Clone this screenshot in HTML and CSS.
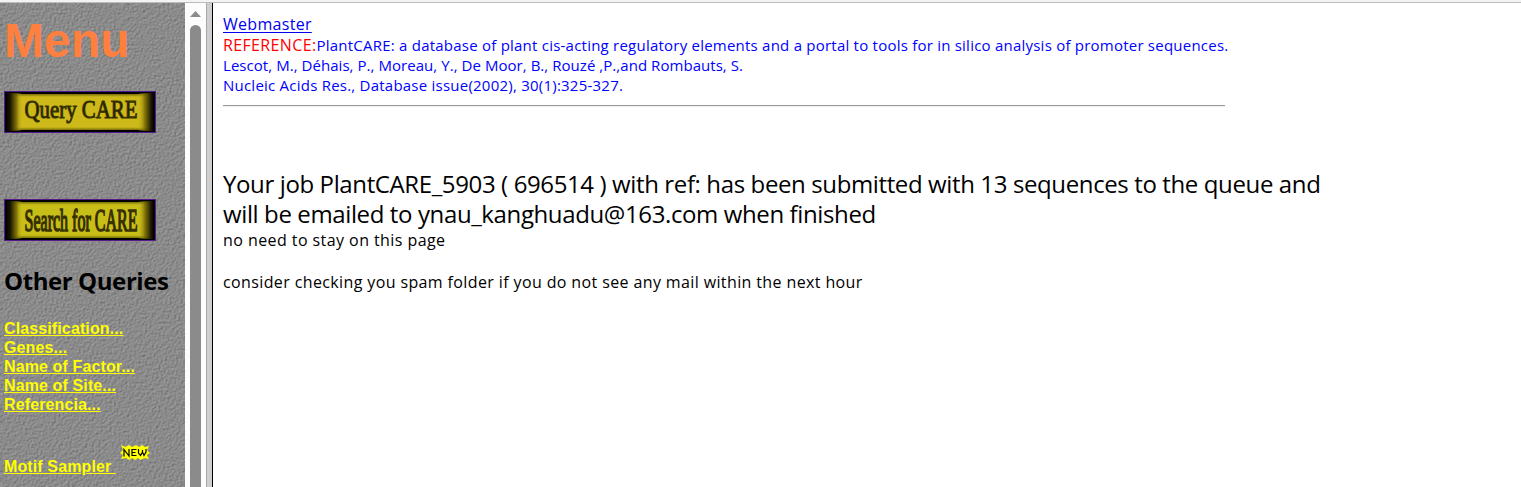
FILE: index.html
```html
<!DOCTYPE html>
<html lang="en">
<head>
<meta charset="utf-8">
<title>PlantCARE</title>
<link rel="stylesheet" href="styles.css">
</head>
<body>
<div class="topbar"></div>
<div class="frames">
  <nav class="sidebar">
    <svg class="texture" width="185" height="484" aria-hidden="true">
      <filter id="stone" x="0" y="0" width="100%" height="100%" color-interpolation-filters="sRGB">
        <feTurbulence type="fractalNoise" baseFrequency="0.45" numOctaves="2" seed="8" result="n"/>
        <feDiffuseLighting in="n" surfaceScale="1.2" diffuseConstant="0.78" lighting-color="#ffffff">
          <feDistantLight azimuth="225" elevation="45"/>
        </feDiffuseLighting>
      </filter>
      <rect width="185" height="484" fill="#8b8b8b"/>
      <rect width="185" height="484" filter="url(#stone)" opacity=".34"/>
    </svg>
    <div class="menu">
      <h1 class="title">Menu</h1>
      <a class="plate" href="#">
        <svg width="152" height="42" viewBox="0 0 152 42">
          <defs>
            <linearGradient id="gx">
              <stop offset="0" stop-color="#000"/><stop offset=".03" stop-color="#1c1800"/><stop offset=".07" stop-color="#685b04" stop-opacity=".8"/><stop offset=".11" stop-color="#cdb91a" stop-opacity="0"/>
              <stop offset=".89" stop-color="#cdb91a" stop-opacity="0"/><stop offset=".94" stop-color="#685b04" stop-opacity=".8"/><stop offset=".98" stop-color="#1c1800"/><stop offset="1" stop-color="#000"/>
            </linearGradient>
            <linearGradient id="gy" x2="0" y2="1">
              <stop offset="0" stop-color="#7a6c08"/><stop offset=".08" stop-color="#cdb91a"/><stop offset=".92" stop-color="#cdb91a"/><stop offset="1" stop-color="#7a6c08"/>
            </linearGradient>
            <linearGradient id="gy2" x2="0" y2="1">
              <stop offset="0" stop-color="#7a7008"/><stop offset=".08" stop-color="#c8be18"/><stop offset=".92" stop-color="#c8be18"/><stop offset="1" stop-color="#7a7008"/>
            </linearGradient>
          </defs>
          <rect width="152" height="42" fill="#551a8b"/>
          <rect x="1" y="1" width="150" height="40" fill="#000"/>
          <rect x="3" y="3" width="146" height="36" fill="url(#gy)"/>
          <rect x="2" y="2" width="148" height="38" fill="url(#gx)"/>
          <text class="plate-text" transform="translate(20.5 26.500) scale(1 1.14)" font-size="22" textLength="113" lengthAdjust="spacingAndGlyphs">Query CARE</text>
        </svg>
      </a>
      <a class="plate second" href="#">
        <svg width="152" height="42" viewBox="0 0 152 42">
          <rect width="152" height="42" fill="#551a8b"/>
          <rect x="1" y="1" width="150" height="40" fill="#000"/>
          <rect x="3" y="3" width="146" height="36" fill="url(#gy2)"/>
          <rect x="2" y="2" width="148" height="38" fill="url(#gx)"/>
          <text class="plate-text" transform="translate(20.5 31.500) scale(1 1.88)" font-size="17" textLength="113" lengthAdjust="spacingAndGlyphs">Search for CARE</text>
        </svg>
      </a>
      <h2 class="subtitle">Other Queries</h2>
      <div class="links">
        <a href="#">Classification...</a>
        <a href="#">Genes...</a>
        <a href="#">Name of Factor...</a>
        <a href="#">Name of Site...</a>
        <a href="#">Referencia...</a>
      </div>
      <div class="sampler">
        <a href="#">Motif Sampler&nbsp;</a>
        <svg class="new" width="30" height="16" viewBox="0 0 30 16">
          <path d="M1 0L5 2 9 0 12 2 16 0 19 2 22 0 25 2 29 1 27 5 30 8 27 10 29 14 24 13 21 15 18 13 15 15 12 13 9 15 6 13 1 14 3 10 0 8 3 5Z" fill="#ff0"/>
          <path d="M4 11.500V4.500L9 11V4M16.500 4.500H12V10.500H16.500M12 7.500H15.500M18.500 4V8L20.500 10.500 22.500 7V5V7L24 10.500 26 7V4" fill="none" stroke="#000" stroke-width="1.200"/>
        </svg>
      </div>
    </div>
  </nav>
  <div class="scrollbar"><div class="arrow"></div><div class="thumb"></div></div>
  <div class="divider"></div>
  <main class="main">
    <div class="webmaster"><a href="#">Webmaster</a></div>
    <div class="reference">
      <p><span class="red">REFERENCE:</span><span class="r1">PlantCARE: a database of plant cis-acting regulatory elements and a portal to tools for in silico analysis of promoter sequences.</span></p>
      <p class="r2">Lescot, M., Déhais, P., Moreau, Y., De Moor, B., Rouzé ,P.,and Rombauts, S.</p>
      <p class="r3">Nucleic Acids Res., Database issue(2002), 30(1):325-327.</p>
    </div>
    <div class="rule"></div>
    <div class="job">
      <p class="j1">Your job PlantCARE_5903 ( 696514 ) with ref: has been submitted with 13 sequences to the queue and</p>
      <p class="j2">will be emailed to ynau_kanghuadu@163.com when finished</p>
    </div>
    <p class="note n1">no need to stay on this page</p>
    <p class="note n2">consider checking you spam folder if you do not see any mail within the next hour</p>
  </main>
</div>
</body>
</html>
```
FILE: styles.css
```css
* { box-sizing: border-box; }
body { margin: 0; height: 487px; overflow: hidden; background: #fff; font-family: "Open Sans", "Noto Sans", sans-serif; color: #000; }
h1, h2, p { margin: 0; font-weight: normal; }
.topbar { height: 3px; background: #f3f3f3; border-bottom: 1px solid #bcbcbc; }
.frames { display: flex; height: 484px; }
.sidebar { position: relative; width: 185px; flex: none; overflow: hidden; background: #8b8b8b; }
.texture { position: absolute; left: 0; top: 0; }
.menu { position: relative; padding-left: 4px; }
.title { font: bold 48px/55px "Liberation Sans", sans-serif; color: #ff7f3f; padding-top: 10px; height: 88px; letter-spacing: .1px; }
.plate { display: block; height: 42px; }
.plate svg { display: block; }
.plate-text { font-family: "Liberation Serif", serif; fill: #1f1b00; stroke: #3a3400; stroke-width: .9px; }
.second { margin-top: 66px; }
.subtitle { margin-top: 23px; height: 55px; font-size: 24px; line-height: 34px; font-weight: bold; white-space: nowrap; letter-spacing: -.42px; }
.links { display: flex; flex-direction: column; align-items: flex-start; }
.links a, .sampler a { font: bold 16px/19px "Liberation Sans", sans-serif; color: #ff0; text-decoration: underline; white-space: nowrap; letter-spacing: .12px; }
.sampler { display: flex; align-items: flex-start; margin-top: 27px; }
.sampler a { margin-top: 16px; }
.new { margin: 4px 0 0 4px; }
.scrollbar { width: 21px; flex: none; overflow: hidden; background: #fcfcfc; padding: 7px 0 0 5px; }
.arrow { width: 11px; height: 6px; margin-top: 1px; background: #8b8b8b; clip-path: polygon(50% 0, 100% 100%, 0 100%); }
.thumb { margin-top: 8px; width: 11px; height: 490px; border-radius: 6px; background: #8b8b8b; }
.divider { width: 7px; flex: none; background: #cecece; border-left: 1px solid #a8a8a8; border-right: 1px solid #000; }
.main { padding: 11px 0 0 10px; white-space: nowrap; }
.webmaster { font-size: 16px; line-height: 21px; height: 21px; letter-spacing: .3px; }
.webmaster a { color: #0000ee; text-underline-offset: 2px; }
.reference { font-size: 15px; line-height: 20px; color: #00f; }
.reference p { height: 20px; }
.red { color: #f00; font-size: 16px; letter-spacing: .36px; }
.r1 { letter-spacing: .228px; }
.r2 { letter-spacing: .05px; }
.r3 { letter-spacing: .23px; }
.rule { margin-top: 10px; width: 1002px; height: 2px; border-top: 1px solid #999; border-bottom: 1px solid #eee; }
.job { margin-top: 62px; height: 61px; font-size: 24px; line-height: 30px; letter-spacing: -.38px; }
.note { font-size: 16px; line-height: 21px; }
.n1 { letter-spacing: .43px; }
.n2 { margin-top: 21px; letter-spacing: .38px; }
```
